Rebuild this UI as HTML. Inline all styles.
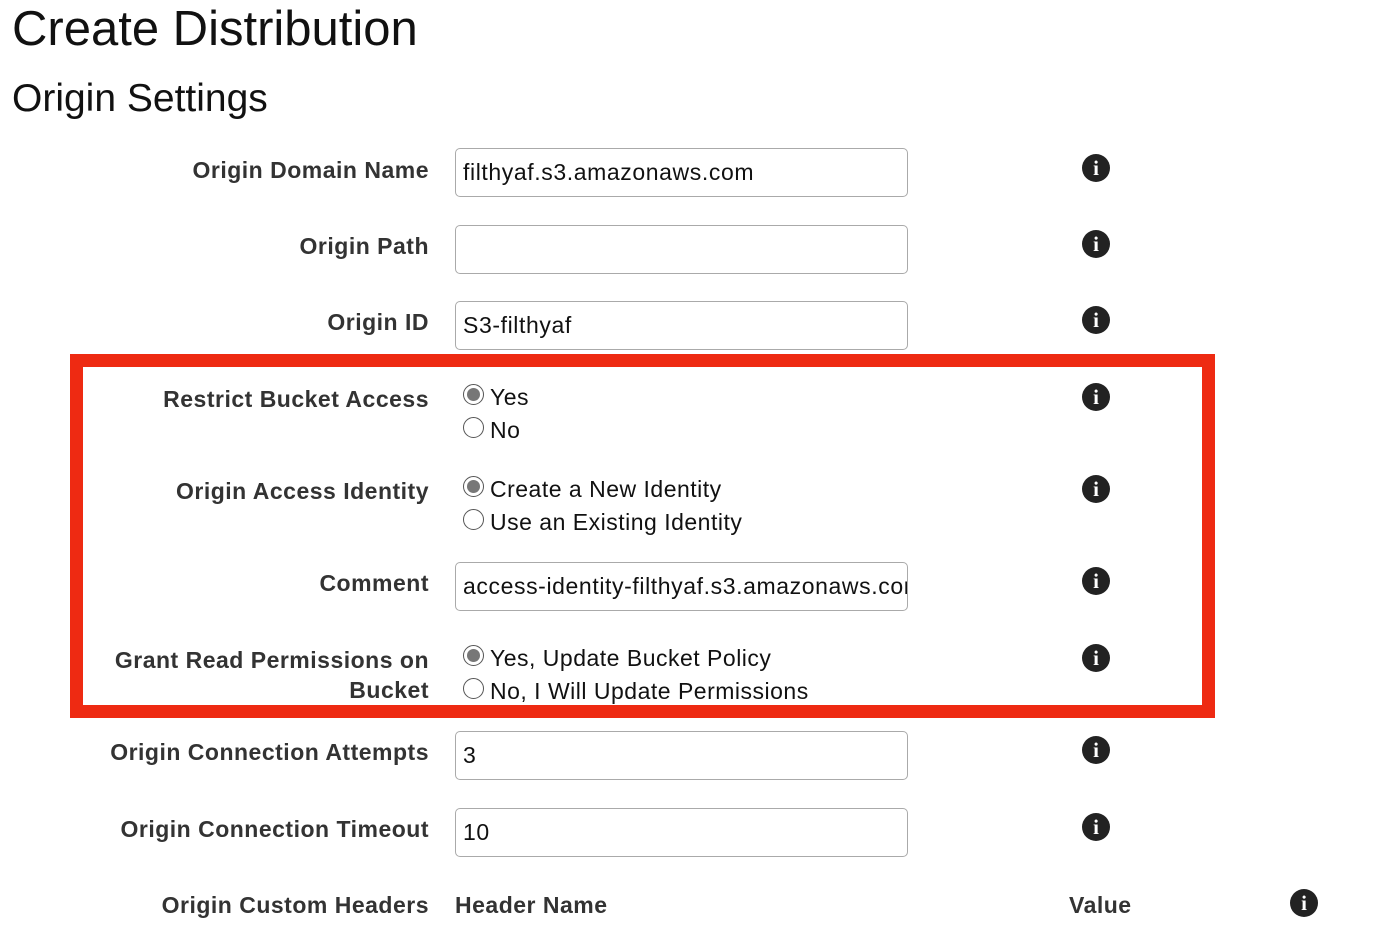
<!DOCTYPE html>
<html><head><style>
body{margin:0;width:1400px;height:936px;background:#fff;font-family:"Liberation Sans",Arial,sans-serif;color:#111;position:relative;overflow:hidden}
.a{position:absolute;white-space:nowrap}
.lbl{position:absolute;right:971px;font-weight:bold;font-size:23px;letter-spacing:0.5px;color:#333;text-align:right;line-height:30px;white-space:nowrap}
.inp{position:absolute;left:455px;width:453px;height:49px;border:1px solid #aaa;border-radius:5px;box-sizing:border-box;font-size:23px;letter-spacing:0.6px;line-height:47px;padding-left:7px;overflow:hidden;white-space:nowrap}
.i{position:absolute;left:1082px;width:28px;height:28px;border-radius:50%;background:#222;color:#fff;font:bold 21px "Liberation Serif",serif;text-align:center;line-height:28px}
.r{position:absolute;left:463px;width:21px;height:21px;border:1px solid #555;border-radius:50%;box-sizing:border-box;background:#fff}
.r.on::after{content:"";position:absolute;left:3px;top:3px;width:13px;height:13px;border-radius:50%;background:#777}
.t{position:absolute;left:490px;font-size:23px;letter-spacing:0.5px;line-height:30px;white-space:nowrap}
.h{position:absolute;font-weight:bold;font-size:23px;letter-spacing:0.5px;color:#333;line-height:30px;white-space:nowrap}
</style></head><body>
<div class="a" style="left:12px;top:0;font-size:49px;line-height:58px">Create Distribution</div>
<div class="a" style="left:12px;top:76px;font-size:39px;line-height:46px">Origin Settings</div>

<div class="lbl" style="top:155px">Origin Domain Name</div>
<div class="inp" style="top:148px">filthyaf.s3.amazonaws.com</div>
<div class="i" style="top:154px">i</div>

<div class="lbl" style="top:231px">Origin Path</div>
<div class="inp" style="top:225px"></div>
<div class="i" style="top:230px">i</div>

<div class="lbl" style="top:307px">Origin ID</div>
<div class="inp" style="top:301px">S3-filthyaf</div>
<div class="i" style="top:306px">i</div>

<div style="position:absolute;left:70px;top:354px;width:1145px;height:364px;border:13px solid #ee2a12;box-sizing:border-box"></div>

<div class="lbl" style="top:384px">Restrict Bucket Access</div>
<div class="r on" style="top:384px"></div><div class="t" style="top:382px">Yes</div>
<div class="r" style="top:417px"></div><div class="t" style="top:415px">No</div>
<div class="i" style="top:383px">i</div>

<div class="lbl" style="top:476px">Origin Access Identity</div>
<div class="r on" style="top:476px"></div><div class="t" style="top:474px">Create a New Identity</div>
<div class="r" style="top:509px"></div><div class="t" style="top:507px">Use an Existing Identity</div>
<div class="i" style="top:475px">i</div>

<div class="lbl" style="top:568px">Comment</div>
<div class="inp" style="top:562px;padding-right:0">access-identity-filthyaf.s3.amazonaws.com</div>
<div class="i" style="top:567px">i</div>

<div class="lbl" style="top:645px">Grant Read Permissions on<br>Bucket</div>
<div class="r on" style="top:645px"></div><div class="t" style="top:643px">Yes, Update Bucket Policy</div>
<div class="r" style="top:678px"></div><div class="t" style="top:676px">No, I Will Update Permissions</div>
<div class="i" style="top:644px">i</div>

<div class="lbl" style="top:737px">Origin Connection Attempts</div>
<div class="inp" style="top:731px">3</div>
<div class="i" style="top:736px">i</div>

<div class="lbl" style="top:814px">Origin Connection Timeout</div>
<div class="inp" style="top:808px">10</div>
<div class="i" style="top:813px">i</div>

<div class="lbl" style="top:890px">Origin Custom Headers</div>
<div class="h" style="left:455px;top:890px">Header Name</div>
<div class="h" style="left:1069px;top:890px">Value</div>
<div class="i" style="top:889px;left:1290px">i</div>
</body></html>
